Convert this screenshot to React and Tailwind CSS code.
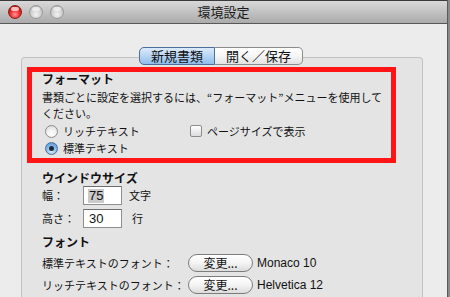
import React from "react";

const jp = { fontFamily: '"Noto Sans CJK JP", "Noto Sans", sans-serif' };
const lat = { fontFamily: '"Liberation Sans", "Noto Sans CJK JP", sans-serif' };

function Light({ red }) {
  return red ? (
    <div className="w-[14px] h-[14px] rounded-full border border-[#8a1a1a] bg-[radial-gradient(circle_at_50%_70%,#ff9a9a_0%,#f02a2a_45%,#b00000_100%)] flex items-start justify-center">
      <div className="w-[8px] h-[4px] mt-[1px] rounded-full bg-white/70" />
    </div>
  ) : (
    <div className="w-[14px] h-[14px] rounded-full border border-[#9a9a9a] bg-[radial-gradient(circle_at_50%_70%,#f2f2f2_0%,#d0d0d0_50%,#a8a8a8_100%)] flex items-start justify-center">
      <div className="w-[8px] h-[4px] mt-[1px] rounded-full bg-white/60" />
    </div>
  );
}

function Radio({ on }) {
  return on ? (
    <div className="w-[13px] h-[13px] rounded-full border border-[#4a6f9e] bg-[radial-gradient(circle_at_50%_75%,#d6ecff_0%,#7fb6ea_55%,#4f8fd0_100%)] flex items-center justify-center">
      <div className="w-[5px] h-[5px] rounded-full bg-[#1d2a3a]" />
    </div>
  ) : (
    <div className="w-[13px] h-[13px] rounded-full border border-[#8c8c8c] bg-[radial-gradient(circle_at_50%_75%,#ffffff_0%,#f0f0f0_50%,#d2d2d2_100%)]" />
  );
}

function Btn() {
  return (
    <div
      className="w-[65px] h-[18px] rounded-full border border-[#7c7c7c] bg-linear-to-b from-[#ffffff] via-[#f4f4f4] to-[#dcdcdc] flex items-center justify-center text-[12px] text-[#111] leading-none"
      style={jp}
    >
      変更...
    </div>
  );
}

export default function App() {
  return (
    <div className="w-[450px] h-[297px] bg-[#8a8a8a] overflow-hidden">
      <div className="w-[448px] h-[297px] bg-[#ececec] border-r border-[#5a5a5a] flex flex-col">
        {/* title bar */}
        <div className="h-[24px] shrink-0 border-t border-[#3a3a3a] border-b border-b-[#585858] bg-linear-to-b from-[#d9d9d9] to-[#ababab] relative flex items-center">
          <div className="flex items-center gap-[7px] pl-[8px]">
            <Light red />
            <Light />
            <Light />
          </div>
          <div className="absolute inset-0 flex items-center justify-center text-[13px] text-[#1a1a1a]" style={jp}>
            環境設定
          </div>
        </div>

        {/* body */}
        <div className="flex-1 flex flex-col pt-[23px] min-h-0">
          {/* tabs */}
          <div className="relative z-10 flex pl-[139px] h-[18px]" style={jp}>
            <div className="w-[76px] h-[18px] rounded-l-[5px] border border-[#4e6f99] bg-linear-to-b from-[#dcebfb] via-[#b7d4f3] to-[#8fbceb] flex items-center justify-center text-[13px] text-[#111]">
              新規書類
            </div>
            <div className="w-[88px] h-[18px] rounded-r-[5px] border border-l-0 border-[#8c8c8c] bg-linear-to-b from-[#ffffff] via-[#f6f6f6] to-[#e2e2e2] flex items-center justify-center text-[13px] text-[#111]">
              開く／保存
            </div>
          </div>

          {/* group box */}
          <div className="-mt-[8px] ml-[21px] w-[402px] flex-1 rounded-t-[4px] border border-b-0 border-[#c2c2c2] bg-[#e4e4e4] pl-[5px] pt-[9px]">
            {/* red box */}
            <div className="w-[369px] h-[96px] border-[5px] border-[#ff1515] pl-[10px] pt-[0px] text-[11px] text-[#111]" style={jp}>
              <div className="font-bold leading-[14px] text-[12px]">フォーマット</div>
              <div className="mt-[3px] leading-[16px]">
                書類ごとに設定を選択するには、“フォーマット”メニューを使用して
                <br />
                ください。
              </div>
              <div className="mt-[2px] flex items-center h-[16px]">
                <div className="w-[148px] flex items-center pl-[3px]">
                  <Radio />
                  <span className="ml-[5px]">リッチテキスト</span>
                </div>
                <div className="w-[12px] h-[12px] rounded-[2px] border border-[#8c8c8c] bg-linear-to-b from-[#ffffff] to-[#dcdcdc]" />
                <span className="ml-[5px]">ページサイズで表示</span>
              </div>
              <div className="mt-[1px] flex items-center h-[16px] pl-[3px]">
                <Radio on />
                <span className="ml-[5px]">標準テキスト</span>
              </div>
            </div>

            {/* window size */}
            <div className="pl-[15px] text-[11px] text-[#111]" style={jp}>
              <div className="mt-[8px] font-bold leading-[14px] text-[12px]">ウインドウサイズ</div>
              <div className="mt-[1px] flex items-center h-[19px]">
                <span className="w-[41px]">幅：</span>
                <div className="w-[39px] h-[19px] bg-white border border-[#8e8e8e] border-t-[#6e6e6e] flex items-center pl-[4px]">
                  <span className="bg-[#cacaca] text-[13px] leading-[14px] px-[1px]" style={lat}>75</span>
                </div>
                <span className="ml-[7px]">文字</span>
              </div>
              <div className="mt-[4px] flex items-center h-[19px]">
                <span className="w-[41px]">高さ：</span>
                <div className="w-[39px] h-[19px] bg-white border border-[#8e8e8e] border-t-[#6e6e6e] flex items-center pl-[5px]">
                  <span className="text-[13px] leading-[14px]" style={lat}>30</span>
                </div>
                <span className="ml-[10px]">行</span>
              </div>

              <div className="mt-[7px] font-bold leading-[14px] text-[12px]">フォント</div>
              <div className="mt-[5px] flex items-center h-[18px]">
                <span className="w-[146px]">標準テキストのフォント：</span>
                <Btn />
                <span className="ml-[4px] text-[12px]" style={lat}>Monaco 10</span>
              </div>
              <div className="mt-[4px] flex items-center h-[18px]">
                <span className="w-[146px]">リッチテキストのフォント：</span>
                <Btn />
                <span className="ml-[4px] text-[12px]" style={lat}>Helvetica 12</span>
              </div>
            </div>
          </div>
        </div>
      </div>
    </div>
  );
}
